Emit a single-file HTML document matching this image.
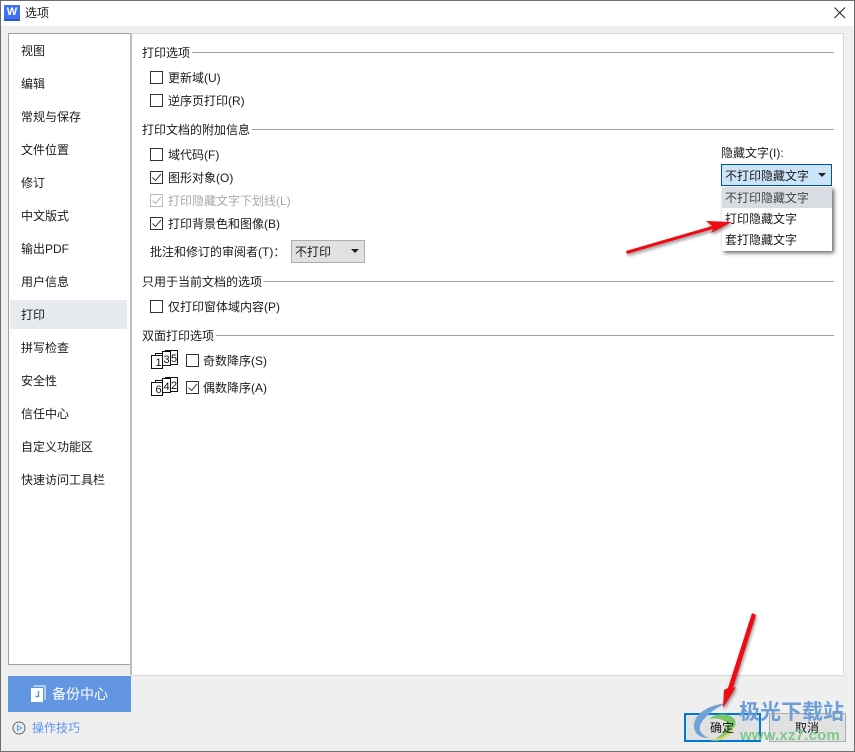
<!DOCTYPE html>
<html><head><meta charset="utf-8">
<style>
html,body{margin:0;padding:0}
body{width:855px;height:752px;position:relative;overflow:hidden;background:#efefef;font-family:"Liberation Sans","Noto Sans CJK SC",sans-serif;font-size:12px;color:#1a1a1a}
.a{position:absolute;white-space:nowrap}
.t{position:absolute;white-space:nowrap;line-height:16px;height:16px}
.n{left:21px}
.g{left:142px}
.line{position:absolute;height:1px;background:#a0a0a0;right:21px}
.c{position:absolute;width:11px;height:11px;border:1px solid #333;background:#fff}
.c svg{position:absolute;left:0;top:0}
.d{color:#a8a8a8}
.dis{border-color:#bbb}
</style></head>
<body>
<div class="a" style="left:0;top:0;width:853px;height:750px;border:1px solid #6e6e6e;"></div>
<div class="a" style="left:1px;top:1px;width:853px;height:25px;background:#fff"></div>
<svg class="a" style="left:4px;top:5px" width="17" height="17"><rect width="16" height="16" rx="1" fill="#3f72f0"/><rect y="14" width="16" height="2" fill="#2a55c8"/></svg>
<div class="a" style="left:6px;top:6px;width:12px;text-align:center;color:#fff;font-weight:bold;font-size:11px;line-height:13px">W</div>
<div class="t" style="left:25px;top:5px">选项</div>
<svg class="a" style="left:833px;top:6px" width="14" height="14"><path d="M1.500 1.500L12 12M12 1.500L1.500 12" stroke="#222" stroke-width="1"/></svg>

<div class="a" style="left:131px;top:33px;width:712px;height:641px;background:#fff;border:1px solid #d8d8d8;border-left:0"></div>
<div class="a" style="left:8px;top:33px;width:121px;height:630px;background:#fff;border:1px solid #a0a0a0"></div>
<div class="a" style="left:130px;top:33px;width:2px;height:642px;background:#bdbdbd"></div>
<div class="a" style="left:10px;top:300px;width:117px;height:29px;background:#e7eaee"></div>

<div class="t n" style="top:43px">视图</div>
<div class="t n" style="top:76px">编辑</div>
<div class="t n" style="top:109px">常规与保存</div>
<div class="t n" style="top:142px">文件位置</div>
<div class="t n" style="top:175px">修订</div>
<div class="t n" style="top:208px">中文版式</div>
<div class="t n" style="top:241px">输出PDF</div>
<div class="t n" style="top:274px">用户信息</div>
<div class="t n" style="top:307px">打印</div>
<div class="t n" style="top:340px">拼写检查</div>
<div class="t n" style="top:373px">安全性</div>
<div class="t n" style="top:406px">信任中心</div>
<div class="t n" style="top:439px">自定义功能区</div>
<div class="t n" style="top:472px">快速访问工具栏</div>

<div class="a" style="left:8px;top:676px;width:123px;height:36px;background:#6295e2"></div>
<svg class="a" style="left:30px;top:685px" width="16" height="18"><path d="M1 3H13V17H1Z" fill="#fff"/><path d="M3.500 1H15V15" fill="none" stroke="#fff" stroke-width="1"/><path d="M8.500 6V11.500H5.500" fill="none" stroke="#6295e2" stroke-width="1.500"/></svg>
<div class="t" style="left:52px;top:686px;color:#fff;font-size:14px">备份中心</div>
<svg class="a" style="left:12px;top:721px" width="15" height="15"><circle cx="7" cy="7" r="6" fill="none" stroke="#666" stroke-width="1"/><path d="M5.500 4.500L9.500 7L5.500 9.500Z" fill="none" stroke="#5a96f0"/></svg>
<div class="t" style="left:32px;top:720px;color:#5a96f0;font-size:12px">操作技巧</div>

<div class="t g" style="top:45px">打印选项</div><div class="line" style="left:192px;top:52px"></div>
<div class="c" style="left:150px;top:71px"></div><div class="t" style="left:168px;top:70px">更新域(U)</div>
<div class="c" style="left:150px;top:94px"></div><div class="t" style="left:168px;top:93px">逆序页打印(R)</div>
<div class="t g" style="top:122px">打印文档的附加信息</div><div class="line" style="left:252px;top:129px"></div>
<div class="c" style="left:150px;top:148px"></div><div class="t" style="left:168px;top:147px">域代码(F)</div>
<div class="c" style="left:150px;top:171px"><svg width="11" height="11"><path d="M1.500 5.500L4.500 8.500L10 2" fill="none" stroke="#444"/></svg></div><div class="t" style="left:168px;top:170px">图形对象(O)</div>
<div class="c dis" style="left:150px;top:194px"><svg width="11" height="11"><path d="M1.500 5.500L4.500 8.500L10 2" fill="none" stroke="#b5b5b5"/></svg></div><div class="t d" style="left:168px;top:193px">打印隐藏文字下划线(L)</div>
<div class="c" style="left:150px;top:217px"><svg width="11" height="11"><path d="M1.500 5.500L4.500 8.500L10 2" fill="none" stroke="#444"/></svg></div><div class="t" style="left:168px;top:216px">打印背景色和图像(B)</div>
<div class="t" style="left:150px;top:244px">批注和修订的审阅者(T)：</div>
<div class="a" style="left:291px;top:240px;width:72px;height:21px;background:#e1e1e1;border:1px solid #adadad"></div>
<div class="t" style="left:295px;top:244px">不打印</div>
<svg class="a" style="left:351px;top:249px" width="9" height="5"><path d="M0 0H8L4 4Z" fill="#222"/></svg>

<div class="t g" style="top:274px">只用于当前文档的选项</div><div class="line" style="left:264px;top:281px"></div>
<div class="c" style="left:150px;top:300px"></div><div class="t" style="left:168px;top:299px">仅打印窗体域内容(P)</div>
<div class="t g" style="top:328px">双面打印选项</div><div class="line" style="left:216px;top:335px"></div>

<svg class="a" style="left:150px;top:350px;font-family:'Liberation Sans',sans-serif;font-size:11px" width="30" height="22"><rect x="20.500" y="0.500" width="7" height="14" fill="#fff" stroke="#111"/><rect x="12.500" y="1.500" width="8" height="14" fill="#fff" stroke="#111"/><path d="M5.500 5V3.500H12.500M15.500 1.500V0.500H20.500" fill="none" stroke="#111"/><rect x="1.500" y="5.500" width="11" height="13" fill="#fff" stroke="#111"/><text x="8.500" y="16" text-anchor="middle" fill="#111">1</text><text x="16.500" y="13" text-anchor="middle" fill="#111">3</text><text x="24" y="12" text-anchor="middle" fill="#111">5</text></svg>
<div class="c" style="left:186px;top:354px"></div><div class="t" style="left:203px;top:353px">奇数降序(S)</div>
<svg class="a" style="left:150px;top:377px;font-family:'Liberation Sans',sans-serif;font-size:11px" width="30" height="22"><rect x="20.500" y="0.500" width="7" height="14" fill="#fff" stroke="#111"/><rect x="12.500" y="1.500" width="8" height="14" fill="#fff" stroke="#111"/><path d="M5.500 5V3.500H12.500M15.500 1.500V0.500H20.500" fill="none" stroke="#111"/><rect x="1.500" y="5.500" width="11" height="13" fill="#fff" stroke="#111"/><text x="8.500" y="16" text-anchor="middle" fill="#111">6</text><text x="16.500" y="13" text-anchor="middle" fill="#111">4</text><text x="24" y="12" text-anchor="middle" fill="#111">2</text></svg>
<div class="c" style="left:186px;top:381px"><svg width="11" height="11"><path d="M1.500 5.500L4.500 8.500L10 2" fill="none" stroke="#444"/></svg></div><div class="t" style="left:203px;top:380px">偶数降序(A)</div>

<div class="t" style="left:721px;top:145px">隐藏文字(I):</div>
<div class="a" style="left:721px;top:164px;width:109px;height:20px;background:#cce4f7;border:1px solid #005499"></div>
<div class="t" style="left:725px;top:168px">不打印隐藏文字</div>
<svg class="a" style="left:818px;top:173px" width="9" height="5"><path d="M0 0H8L4 4Z" fill="#222"/></svg>
<div class="a" style="left:722px;top:187px;width:110px;height:64px;background:#fff;box-shadow:2px 2px 4px rgba(0,0,0,.6)"></div>
<div class="a" style="left:722px;top:187px;width:110px;height:21px;background:#d9dde3"></div>
<div class="t" style="left:725px;top:190px;color:#444">不打印隐藏文字</div>
<div class="t" style="left:725px;top:211px">打印隐藏文字</div>
<div class="t" style="left:725px;top:232px">套打隐藏文字</div>

<div class="a" style="left:684px;top:713px;width:73px;height:25px;background:#e1e1e1;border:2px solid #0078d7"></div>
<div class="a" style="left:769px;top:713px;width:75px;height:27px;background:#e1e1e1;border:1px solid #adadad"></div>
<svg class="a" style="left:685px;top:695px" width="70" height="52">
<path d="M42 8C22 10 8 20 9 32C10 40 16 43 24 43C14 39 12 32 19 24C25 17 33 12 42 8Z" fill="#6fa3d8"/>
<path d="M24 24C32 17 46 18 50 25C53 34 42 43 30 44C40 38 45 31 41 27C36 23 29 23 24 24Z" fill="#7cc66a"/>
<path d="M22 44C32 46 44 40 50 30C48 42 34 49 22 44Z" fill="#d8dc70"/>
</svg>
<div class="t" style="left:710px;top:720px;color:#111">确定</div>
<div class="t" style="left:795px;top:720px;color:#111">取消</div>
<div class="t" style="left:739px;top:699px;color:#6d9fd6;font-size:21px;font-weight:bold;line-height:28px;height:28px">极光下载站</div>
<div class="t" style="left:740px;top:727px;color:#7ec98b;font-size:15px;font-weight:bold;line-height:18px;height:18px;letter-spacing:.2px">www.xz7.com</div>

<svg class="a" style="left:0;top:0;pointer-events:none" width="855" height="752">
<defs><filter id="s" x="-20%" y="-20%" width="140%" height="140%"><feDropShadow dx="1" dy="2" stdDeviation="1.500" flood-color="#000" flood-opacity=".45"/></filter></defs>
<g filter="url(#s)" fill="#ee0f16">
<path d="M626 251L712 226L706 221L732 222L711 233L713 229L627 254Z"/>
<path d="M752 613L756 615L733 688L736 687L723 708L724 690L728 688Z"/>
</g>
</svg>
</body></html>
